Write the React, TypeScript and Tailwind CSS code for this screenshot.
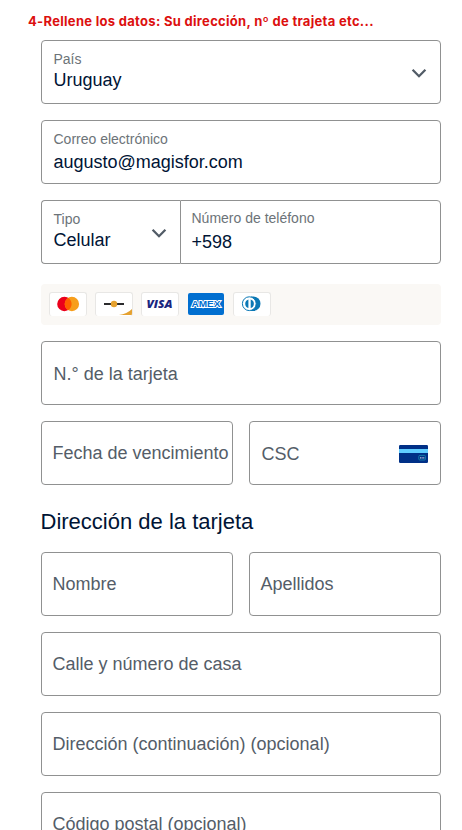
import React from 'react';

interface FieldProps {
    label: string;
    value?: string;
    className?: string;
    valueClass?: string;
    children?: React.ReactNode;
}

const Chevron: React.FC = () => (
    <svg className="w-4 h-4 shrink-0" viewBox="0 0 16 16" fill="none" stroke="#515b66" strokeWidth="2.3">
        <path d="M1.6 4.8 L8 11.2 L14.4 4.8" />
    </svg>
);

// Empty fields show the label in the middle, filled ones show it above the value
const Field: React.FC<FieldProps> = ({ label, value, className = '', valueClass = '', children }) => (
    <div className={`flex items-center justify-between h-16 border border-[#909191] rounded-[4px] bg-white whitespace-nowrap ${className}`}>
        {value ? (
            <div className="self-start">
                <p className="text-sm leading-4 text-[#6c7378]">{label}</p>
                <p className={`text-lg leading-6 text-[#001435] ${valueClass}`}>{value}</p>
            </div>
        ) : (
            <span className="text-lg leading-6 text-[#545d68]">{label}</span>
        )}
        {children}
    </div>
);

const CardBrand: React.FC<{ children: React.ReactNode }> = ({ children }) => (
    <div className="w-[38px] h-6 shrink-0 overflow-hidden border border-b-0 border-[#e8e7e5] rounded-[3px] bg-white">
        <svg className="block w-9 h-[22px]" viewBox="0 0 36 22">{children}</svg>
    </div>
);

const CardBrands: React.FC = () => (
    <div className="flex items-start gap-2 mt-5 h-[41px] pl-2 pt-2 rounded-[4px] bg-[#faf8f5]">
        <CardBrand>
            <circle cx="14.4" cy="11" r="7.2" fill="#eb001b" />
            <circle cx="21.9" cy="11" r="7.2" fill="#f79e1b" />
            <path d="M18.15 4.85a7.2 7.2 0 0 1 0 12.3a7.2 7.2 0 0 1 0-12.3z" fill="#ff5f00" />
        </CardBrand>
        <CardBrand>
            <path d="M8 11h20" stroke="#2b2b2d" strokeWidth="2" />
            <circle cx="18" cy="11" r="3.2" fill="#e5a12f" />
            <path d="M23 22Q31 21 36 16V22z" fill="#e5a12f" />
        </CardBrand>
        <CardBrand>
            <text x="4.5" y="15" fontFamily="Open Sans, sans-serif" fontSize="11" fontWeight="800" fontStyle="italic" textLength="26" lengthAdjust="spacingAndGlyphs" fill="#1a2580">VISA</text>
        </CardBrand>
        <div className="w-[38px] h-6 shrink-0 px-px pt-px">
            <svg className="block w-9 h-[22px]" viewBox="0 0 36 22">
                <rect width="36" height="22" rx="2" fill="#016fd0" />
                <text x="3.5" y="14" fontFamily="Liberation Sans, sans-serif" fontSize="9.5" fontWeight="700" textLength="29" lengthAdjust="spacingAndGlyphs" fill="#016fd0" stroke="#fff" strokeWidth="1.9" paintOrder="stroke">AMEX</text>
            </svg>
        </div>
        <CardBrand>
            <path d="M17 3.5H19.3a7.2 7.2 0 0 1 0 14.4H17z" fill="#0a78b5" />
            <circle cx="15.3" cy="10.7" r="6.9" fill="#fff" stroke="#0a78b5" strokeWidth="1" />
            <path d="M14.4 6.4a4.5 4.5 0 0 0 0 8.6zM16.7 6.4a4.5 4.5 0 0 1 0 8.6z" fill="#0a78b5" />
        </CardBrand>
    </div>
);

const CscIcon: React.FC = () => (
    <svg className="w-[29px] h-[18px] shrink-0" viewBox="0 0 29 18">
        <rect width="29" height="18" rx="1.2" fill="#003087" />
        <path d="M0 4h29v4H0z" fill="#60cdff" />
        <rect x="19.8" y="10.4" width="6.6" height="4.6" rx="1" fill="none" stroke="#168eb0" strokeWidth=".8" />
        <path d="M21 12.9h4.4" stroke="#b9cbe0" strokeWidth="1.1" strokeDasharray="1.1 .5" />
    </svg>
);

export default function App() {
    return (
        <main className="w-[462px] h-[830px] overflow-hidden bg-white font-['Liberation_Sans',Arial,sans-serif]">
            <p className="h-10 pl-7 pt-[11px] font-['Inter',sans-serif] text-[13px] leading-5 font-bold tracking-[0.3px] text-[#dc100f] whitespace-nowrap">
                4-Rellene los datos: Su dirección, nº de trajeta etc...
            </p>
            <div className="ml-[41px] w-[400px]">
                <Field label="País" value="Uruguay" valueClass="mt-px" className="pl-[11.5px] pr-[13px] pt-[10px]">
                    <div className="pb-2"><Chevron /></div>
                </Field>
                <Field label="Correo electrónico" value="augusto@magisfor.com" valueClass="mt-[3px]" className="mt-4 pl-[11.5px] pt-[10px]" />
                <div className="flex mt-4">
                    <Field label="Tipo" value="Celular" valueClass="mt-px" className="w-[139px] border-r-0 rounded-r-none pl-[11.5px] pr-[13px] pt-[10px]">
                        <div className="pb-2"><Chevron /></div>
                    </Field>
                    <Field label="Número de teléfono" value="+598" valueClass="mt-1" className="flex-1 rounded-l-none pl-[10.5px] pt-[9px]" />
                </div>
                <CardBrands />
                <Field label="N.° de la tarjeta" className="mt-4 pl-[11.5px] pt-0.5" />
                <div className="grid grid-cols-2 gap-4 mt-4">
                    <Field label="Fecha de vencimiento" className="pl-[10.5px]" />
                    <Field label="CSC" className="pl-[11.5px] pr-3 pt-0.5">
                        <CscIcon />
                    </Field>
                </div>
                <h2 className="-ml-[0.5px] mt-[23px] mb-4 text-[22px] leading-7 text-[#001435]">Dirección de la tarjeta</h2>
                <div className="grid grid-cols-2 gap-4">
                    <Field label="Nombre" className="pl-[10.5px]" />
                    <Field label="Apellidos" className="pl-[10.5px]" />
                </div>
                <Field label="Calle y número de casa" className="mt-4 pl-[10.5px]" />
                <Field label="Dirección (continuación) (opcional)" className="mt-4 pl-[10.5px]" />
                <Field label="Código postal (opcional)" className="mt-4 pl-[10.5px]" />
            </div>
        </main>
    );
}
